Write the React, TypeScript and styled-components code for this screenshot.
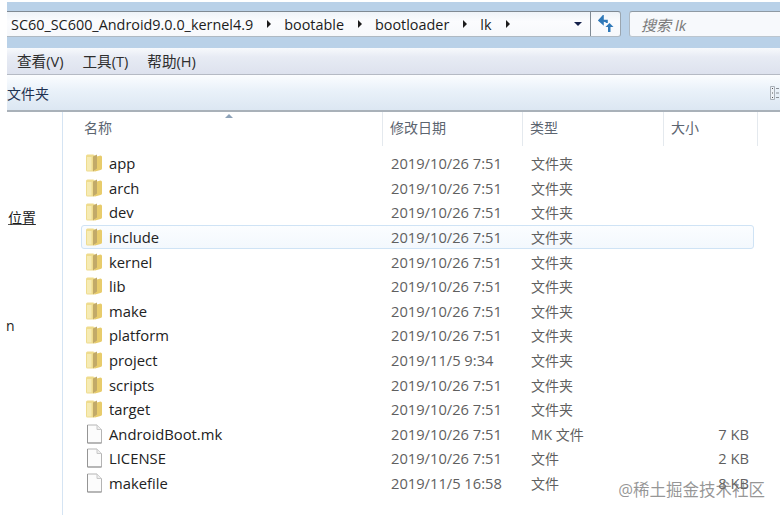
import styled, {createGlobalStyle} from 'styled-components'

type FileRow = {
	name: string
	date: string
	type: string
	size?: string
	isFile?: boolean
	hover?: boolean
}

const rows: FileRow[] = [
	{name: 'app', date: '2019/10/26 7:51', type: '文件夹'},
	{name: 'arch', date: '2019/10/26 7:51', type: '文件夹'},
	{name: 'dev', date: '2019/10/26 7:51', type: '文件夹'},
	{name: 'include', date: '2019/10/26 7:51', type: '文件夹', hover: true},
	{name: 'kernel', date: '2019/10/26 7:51', type: '文件夹'},
	{name: 'lib', date: '2019/10/26 7:51', type: '文件夹'},
	{name: 'make', date: '2019/10/26 7:51', type: '文件夹'},
	{name: 'platform', date: '2019/10/26 7:51', type: '文件夹'},
	{name: 'project', date: '2019/11/5 9:34', type: '文件夹'},
	{name: 'scripts', date: '2019/10/26 7:51', type: '文件夹'},
	{name: 'target', date: '2019/10/26 7:51', type: '文件夹'},
	{name: 'AndroidBoot.mk', date: '2019/10/26 7:51', type: 'MK 文件', size: '7 KB', isFile: true},
	{name: 'LICENSE', date: '2019/10/26 7:51', type: '文件', size: '2 KB', isFile: true},
	{name: 'makefile', date: '2019/11/5 16:58', type: '文件', size: '8 KB', isFile: true},
]

const crumbs = ['bootable', 'bootloader', 'lk']

function FolderIcon () {
	return <svg width="18" height="20" viewBox="0 0 18 20">
		<path d="M1 3 Q1 1.5 2.5 1.5 L8 1.5 Q10 1.5 10 3.5 L10 18.5 L2.5 18.5 Q1 18.5 1 17 Z" fill="#efdc8e" />
		<path d="M10 4 L15.5 2.5 Q17 2.5 17 4 L17 15.5 Q17 16.8 15.5 17 L10 18.5 Z" fill="#e8cc6c" />
		<path d="M8 3.5 L12 1.5 L12 15.5 L8 18.5 Z" fill="#c2aa68" />
		<path d="M2 4 L6.5 4 L6.5 17.5 L2 17.5 Z" fill="#faf1c4" opacity="0.7" />
	</svg>
}

function FileIcon () {
	return <svg width="17" height="20" viewBox="0 0 17 20">
		<path d="M1.5 1 L11 1 L15.5 5.5 L15.5 19 L1.5 19 Z" fill="#fcfcfc" stroke="#b4b4b4" />
		<path d="M11 1 L11 5.5 L15.5 5.5" fill="#eeeeee" stroke="#c8c8c8" />
		<path d="M1.5 1 L1.5 19 L15.5 19" fill="none" stroke="#959595" />
	</svg>
}

function RefreshIcon () {
	return <svg width="18" height="18" viewBox="0 0 18 18">
		<path d="M6 1 L2 5.5 L6 9 Z M4 5.5 L10 5.5 L10 8" fill="#2f78b8" stroke="#2f78b8" strokeWidth="1.6" />
		<path d="M12.5 8 L16.5 12 L13.5 12 L13.5 17 L11 17 L11 12 L8.5 12 Z" fill="#2f78b8" />
	</svg>
}

function GripIcon () {
	return <svg width="9" height="14" viewBox="0 0 9 14">
		<path d="M0.5 0.5 H4.5 V13.5 H0.5 Z" fill="#eef2f7" stroke="#a9b0b8" />
		<path d="M2 2 H3 V3 H2 Z M2 6.5 H3 V7.5 H2 Z M2 11 H3 V12 H2 Z" fill="#555" />
		<path d="M6 2.5 H9 M6 7 H9 M6 11.5 H9" stroke="#8a8f96" />
	</svg>
}

export default function App () {
	return <Page>
		<GlobalStyle />
		<Chrome>
			<NavBand>
				<AddressBar>
					<Path>
						<Crumb>SC60_SC600_Android9.0.0_kernel4.9</Crumb>
						<Arrow />
						{crumbs.map(c => <CrumbGroup key={c}>
							<Crumb>{c}</Crumb>
							<Arrow />
						</CrumbGroup>)}
					</Path>
					<DropArrow />
					<RefreshButton><RefreshIcon /></RefreshButton>
				</AddressBar>
				<SearchBox>搜索 lk</SearchBox>
			</NavBand>
			<MenuBar>
				<MenuItem>查看(V)</MenuItem>
				<MenuItem>工具(T)</MenuItem>
				<MenuItem>帮助(H)</MenuItem>
			</MenuBar>
			<ToolBar>
				<ToolLabel>文件夹</ToolLabel>
				<GripIcon />
			</ToolBar>
		</Chrome>
		<Body>
			<Sidebar>
				<SideLabel>位置</SideLabel>
				<SideStub>n</SideStub>
			</Sidebar>
			<Main>
				<HeaderRow>
					<SortCaret />
					<HeaderCell $width={320} $indent={21}>名称</HeaderCell>
					<HeaderCell $width={140} $indent={7}>修改日期</HeaderCell>
					<HeaderCell $width={141} $indent={7}>类型</HeaderCell>
					<HeaderCell $width={94} $indent={7}>大小</HeaderCell>
				</HeaderRow>
				<List>
					{rows.map(row => <Row key={row.name} $hover={row.hover}>
						<NameCell>
							<IconSlot>{row.isFile ? <FileIcon /> : <FolderIcon />}</IconSlot>
							{row.name}
						</NameCell>
						<MutedCell>{row.date}</MutedCell>
						<TypeCell>{row.type}</TypeCell>
						<MutedCell $right>{row.size}</MutedCell>
					</Row>)}
				</List>
			</Main>
		</Body>
		<Watermark>@稀土掘金技术社区</Watermark>
	</Page>
}

const GlobalStyle = createGlobalStyle`
	html, body {
		margin: 0;
		padding: 0;
		background: #fff;
	}
`

const Page = styled.div`
	position: relative;
	width: 780px;
	height: 515px;
	overflow: hidden;
	padding-left: 7px;
	box-sizing: border-box;
	background: #fff;
	font-family: "Open Sans", "Noto Sans CJK SC", sans-serif;
	color: #2a2a2a;
`

const Chrome = styled.div`
	padding-top: 2px;
`

const NavBand = styled.div`
	display: flex;
	gap: 8px;
	height: 46px;
	padding: 9px 0;
	box-sizing: border-box;
	background: #b9d1e8;
`

const AddressBar = styled.div`
	display: flex;
	align-items: center;
	width: 614px;
	height: 26px;
	box-sizing: border-box;
	padding-left: 4px;
	background: linear-gradient(#eef3f8, #fbfcfe 40%, #f6f8fb);
	border-top: 1px solid #7f8a94;
	border-right: 1px solid #9aa5af;
	border-bottom: 1px solid #aeb9c3;
	border-radius: 0 3px 3px 0;
`

const Path = styled.div`
	display: flex;
	align-items: center;
	flex: 1;
`

const CrumbGroup = styled.div`
	display: flex;
	align-items: center;
`

const Crumb = styled.span`
	font-size: 14.4px;
	color: #1c1c1c;
	white-space: nowrap;
`

const Arrow = styled.span`
	width: 0;
	height: 0;
	margin: 0 13px 0 14px;
	border-left: 4px solid #1c1c1c;
	border-top: 4px solid transparent;
	border-bottom: 4px solid transparent;
`

const DropArrow = styled.span`
	width: 0;
	height: 0;
	margin-right: 8px;
	border-top: 4px solid #14204a;
	border-left: 4px solid transparent;
	border-right: 4px solid transparent;
`

const RefreshButton = styled.div`
	display: flex;
	align-items: center;
	justify-content: center;
	width: 29px;
	height: 100%;
	border-left: 1px solid #7f8a94;
`

const SearchBox = styled.div`
	flex: 1;
	height: 26px;
	box-sizing: border-box;
	padding: 1px 0 0 11px;
	font-size: 15px;
	font-style: italic;
	line-height: 24px;
	color: #7a7a7a;
	background: #f7f9fc;
	border-top: 1px solid #8f9aa4;
	border-left: 1px solid #aeb9c3;
	border-bottom: 1px solid #bcc6cf;
	border-radius: 3px 0 0 3px;
`

const MenuBar = styled.div`
	display: flex;
	gap: 19px;
	height: 27px;
	padding: 0 0 2px 10px;
	box-sizing: border-box;
	align-items: center;
	background: linear-gradient(#f7f9fc, #e7ebf4 35%, #dde2ee);
	border-bottom: 1px solid #b5bac4;
`

const MenuItem = styled.span`
	font-size: 14.6px;
	color: #2d2d2d;
`

const ToolBar = styled.div`
	display: flex;
	align-items: center;
	justify-content: space-between;
	height: 37px;
	box-sizing: border-box;
	padding-right: 1px;
	background: linear-gradient(#fbfdff, #e9f1f9 45%, #dce7f2);
	border-bottom: 2px solid #a9b1b9;
`

const ToolLabel = styled.span`
	font-size: 14px;
	color: #1e3150;
`

const Body = styled.div`
	display: flex;
	height: 404px;
`

const Sidebar = styled.div`
	display: flex;
	flex-direction: column;
	width: 56px;
	flex: none;
	padding-top: 96px;
	box-sizing: border-box;
	border-right: 1px solid #d5e4f3;
	font-size: 14px;
	color: #1c1c1c;
`

const SideLabel = styled.span`
	line-height: 20px;
	margin-left: 1px;
	text-decoration: underline;
	text-decoration-color: #555;
`

const SideStub = styled.span`
	margin-top: 88px;
	line-height: 20px;
	margin-left: -1px;
`

const Main = styled.div`
	flex: 1;
	min-width: 0;
`

const HeaderRow = styled.div`
	position: relative;
	display: flex;
	height: 34px;
`

const SortCaret = styled.span`
	position: absolute;
	left: 162px;
	top: 2px;
	width: 0;
	height: 0;
	border-bottom: 4px solid #8da2b8;
	border-left: 4px solid transparent;
	border-right: 4px solid transparent;
`

const HeaderCell = styled.div<{$width: number, $indent: number}>`
	width: ${props => props.$width + 'px'};
	padding-left: ${props => props.$indent + 'px'};
	box-sizing: border-box;
	border-right: 1px solid #e4e9ee;
	font-size: 14px;
	line-height: 32px;
	color: #5c6570;
`

const List = styled.div`
	margin-left: 18px;
	width: 673px;
	padding-top: 5px;
`

const Row = styled.div<{$hover?: boolean}>`
	display: grid;
	grid-template-columns: 309px 140px 141px 77px;
	align-items: center;
	height: 24.6px;
	box-sizing: border-box;
	border: 1px solid ${props => props.$hover ? '#cfe3f5' : 'transparent'};
	border-radius: 3px;
	background: ${props => props.$hover ? 'linear-gradient(#fbfdff, #f3f8fd)' : 'transparent'};
`

const NameCell = styled.div`
	display: flex;
	align-items: center;
	font-size: 14.8px;
	color: #222;
`

const IconSlot = styled.span`
	display: flex;
	justify-content: center;
	width: 18px;
	margin: 0 6px 0 3px;
`

const MutedCell = styled.div<{$right?: boolean}>`
	font-size: 14.7px;
	color: #5f5f5f;
	white-space: nowrap;
	text-align: ${props => props.$right ? 'right' : 'left'};
`

const TypeCell = styled.div`
	font-size: 14px;
	color: #5f5f5f;
	white-space: nowrap;
`

const Watermark = styled.div`
	position: absolute;
	right: 15px;
	bottom: 14px;
	font-size: 16.5px;
	color: rgba(110, 110, 110, 0.72);
`
